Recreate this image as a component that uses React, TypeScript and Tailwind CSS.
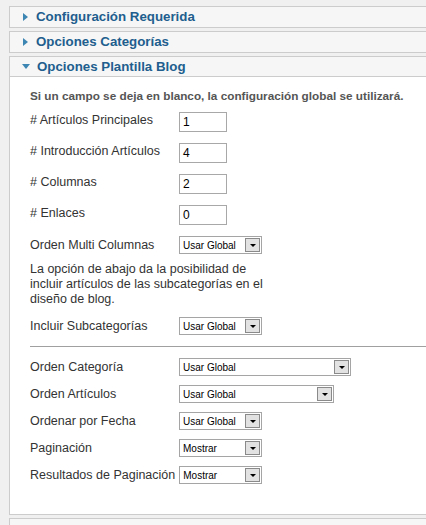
import React from "react";

const Arrow = ({ open }: { open?: boolean }) =>
  open ? (
    <span className="mr-[7px] inline-block h-0 w-0 border-x-[4px] border-t-[5px] border-x-transparent border-t-[#3d86b3]" />
  ) : (
    <span className="ml-[1px] mr-[8px] inline-block h-0 w-0 border-y-[4px] border-l-[5px] border-y-transparent border-l-[#3d86b3]" />
  );

const Toggler = ({ title, open }: { title?: string; open?: boolean }) => (
  <div
    className={`flex h-[20px] items-center bg-[#f6f6f6] pl-[12px] text-[13.3px] font-bold text-[#215e8e] ${
      open ? "border-b border-[#cccccc]" : ""
    }`}
  >
    {title && <Arrow open={open} />}
    {title}
  </div>
);

const TextBox = ({ value }: { value: string }) => (
  <div className="flex h-[20px] w-[48px] items-center border border-[#a8a8a8] bg-white pl-[3px] text-[12px] text-black">
    {value}
  </div>
);

const Select = ({ value, width }: { value: string; width: string }) => (
  <div
    className={`flex h-[18px] items-center justify-between border border-[#a5a5a5] bg-white pl-[3px] text-[10px] text-black ${width}`}
  >
    <span>{value}</span>
    <span className="mr-[1px] flex h-[14px] w-[15px] items-center justify-center border border-[#8a8a8a] bg-[#e2e2e2]">
      <span className="mt-[1px] h-0 w-0 border-x-[3px] border-t-[3px] border-x-transparent border-t-black" />
    </span>
  </div>
);

const InputRow = ({ label, value }: { label: string; value: string }) => (
  <div className="flex items-start">
    <div className="min-w-[149px] pr-1 leading-[16px] whitespace-nowrap">{label}</div>
    <TextBox value={value} />
  </div>
);

const SelectRow = ({ label, value, width }: { label: string; value: string; width: string }) => (
  <div className="flex items-center">
    <div className="min-w-[149px] pr-1 leading-[16px] whitespace-nowrap">{label}</div>
    <Select value={value} width={width} />
  </div>
);

export default function App() {
  return (
    <div
      className="h-[525px] w-[426px] overflow-hidden bg-[#f0f0f0] pl-[9px] pt-[6px]"
      style={{ fontFamily: '"Liberation Sans", Arial, sans-serif' }}
    >
      <div className="w-[440px]">
        <div className="mb-[3px] border border-[#cccccc]">
          <Toggler title="Configuración Requerida" />
        </div>
        <div className="mb-[3px] border border-[#cccccc]">
          <Toggler title="Opciones Categorías" />
        </div>
        <div className="mb-[3px] border border-[#cccccc] bg-white">
          <Toggler title="Opciones Plantilla Blog" open />
          <div className="pb-[30px] pl-[20px] pt-[11px] text-[12.5px] text-[#333333]">
            <p className="mb-[9px] text-[11.75px] font-bold leading-[15px] text-[#555555]">
              Si un campo se deja en blanco, la configuración global se utilizará.
            </p>
            <div className="flex flex-col gap-[11px]">
              <InputRow label="# Artículos Principales" value="1" />
              <InputRow label="# Introducción Artículos" value="4" />
              <InputRow label="# Columnas" value="2" />
              <InputRow label="# Enlaces" value="0" />
              <SelectRow label="Orden Multi Columnas" value="Usar Global" width="w-[83px]" />
            </div>
            <p className="mt-[8px] w-[240px] leading-[15px]">
              La opción de abajo da la posibilidad de incluir artículos de las subcategorías en el diseño de blog.
            </p>
            <div className="mt-[10px]">
              <SelectRow label="Incluir Subcategorías" value="Usar Global" width="w-[83px]" />
            </div>
            <hr className="my-[11px] border-t border-[#a0a0a0]" />
            <div className="flex flex-col gap-[9px]">
              <SelectRow label="Orden Categoría" value="Usar Global" width="w-[172px]" />
              <SelectRow label="Orden Artículos" value="Usar Global" width="w-[155px]" />
              <SelectRow label="Ordenar por Fecha" value="Usar Global" width="w-[83px]" />
              <SelectRow label="Paginación" value="Mostrar" width="w-[83px]" />
              <SelectRow label="Resultados de Paginación" value="Mostrar" width="w-[83px]" />
            </div>
          </div>
        </div>
        <div className="border border-[#cccccc]">
          <Toggler />
        </div>
      </div>
    </div>
  );
}
